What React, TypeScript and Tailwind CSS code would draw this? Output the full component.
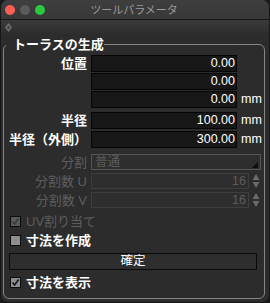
import React from "react";

const F = "font-['Liberation_Sans','Noto_Sans_CJK_JP',sans-serif]";

function Label({ children, disabled }: { children: React.ReactNode; disabled?: boolean }) {
  return (
    <div
      className={`w-[83px] shrink-0 text-right text-[13px] leading-[17px] whitespace-nowrap ${
        disabled ? "text-[#5e5e5e] font-normal" : "text-white font-bold"
      }`}
    >
      {children}
    </div>
  );
}

function NumField({ value, unit, label, className = "" }: { value: string; unit?: boolean; label?: React.ReactNode; className?: string }) {
  return (
    <div className={`flex items-center h-[17px] ${className}`}>
      <Label>{label}</Label>
      <div className="ml-[4px] w-[146px] h-[17px] bg-[#171717] border border-[#050505] flex items-center justify-end pr-[1px] text-[12.5px] leading-[15px] text-white">
        {value}
      </div>
      {unit && <div className="ml-[4px] text-[12.5px] leading-[15px] text-white">mm</div>}
    </div>
  );
}

function SpinField({ label, value, className = "" }: { label: string; value: string; className?: string }) {
  return (
    <div className={`flex items-center h-[16px] ${className}`}>
      <Label disabled>{label}</Label>
      <div className="ml-[4px] w-[158px] h-[16px] bg-[#2e2e2e] border border-[#3e3e3e] flex items-center justify-end pr-[2px] text-[12.5px] leading-[14px] text-[#5c5c5c]">
        {value}
      </div>
      <svg className="ml-[3px]" width="8" height="16" viewBox="0 0 8 16">
        <polygon points="4,1 7.5,7 0.5,7" fill="#6a6a6a" />
        <polygon points="0.5,9 7.5,9 4,15" fill="#6a6a6a" />
      </svg>
    </div>
  );
}

function Check({ checked, disabled, label, className = "" }: { checked?: boolean; disabled?: boolean; label: string; className?: string }) {
  return (
    <div className={`flex items-center h-[18px] ${className}`}>
      <div
        className={`ml-[6px] w-[11px] h-[11px] border border-[#0c0c0c] flex items-center justify-center ${
          disabled ? "bg-[#5a5a5a]" : "bg-[#8e8e8e]"
        }`}
      >
        {checked && (
          <svg width="9" height="9" viewBox="0 0 9 9">
            <path d="M1.5 4.5 L3.6 7 L7.6 1.5" fill="none" stroke={disabled ? "#3a3a3a" : "#151515"} strokeWidth="1.6" />
          </svg>
        )}
      </div>
      <div
        className={`ml-[5px] text-[13px] leading-[17px] ${
          disabled ? "text-[#5e5e5e] font-normal" : "text-white font-bold"
        }`}
      >
        {label}
      </div>
    </div>
  );
}

export default function App() {
  return (
    <div className={`w-[270px] h-[303px] bg-[#1a1a1a] ${F}`}>
      <div className="w-full h-full rounded-[8px] overflow-hidden bg-[#2c2c2c] border-x border-b border-[#161616] flex flex-col">
        {/* title bar */}
        <div className="h-[20px] shrink-0 border-b border-[#161616] bg-linear-to-b from-[#3e3e3e] to-[#383838] grid grid-cols-[1fr_auto_1fr] items-center">
          <div className="flex items-center pl-[4px] gap-[5px]">
            <div className="w-[10px] h-[10px] rounded-full bg-[#fd5f57]" />
            <div className="w-[10px] h-[10px] rounded-full bg-[#5b5b5b]" />
            <div className="w-[10px] h-[10px] rounded-full bg-[#2ac940]" />
          </div>
          <div className="text-[11px] leading-[14px] text-[#9a9a9a] -ml-[2px]">ツールパラメータ</div>
          <div />
        </div>
        {/* toolbar strip */}
        <div className="h-[14px] shrink-0 bg-linear-to-b from-[#3a3a3a] to-[#2d2d2d] flex items-center pl-[4px]">
          <svg width="7" height="9" viewBox="0 0 7 9">
            <polygon points="3.5,0 7,4.5 3.5,9 0,4.5" fill="#6f6f6f" />
            <polygon points="3.5,2.5 5,4.5 3.5,6.5 2,4.5" fill="#3a3a3a" />
          </svg>
        </div>
        {/* group box */}
        <fieldset className="ml-[2px] mr-[4px] mt-[3px] border border-[#858585] rounded-[6px] pb-[7px]">
          <legend className="ml-[2px] pl-[7px] text-[13px] leading-[15px] font-bold text-white">トーラスの生成</legend>
          <div className="flex flex-col pt-[3px]">
            <NumField label="位置" value="0.00" />
            <NumField value="0.00" className="mt-[1px]" />
            <NumField value="0.00" unit className="mt-[1px]" />
            <NumField label="半径" value="100.00" unit className="mt-[4px]" />
            <NumField label="半径（外側）" value="300.00" unit className="mt-[2px]" />
            <div className="flex items-center h-[16px] mt-[6px]">
              <Label disabled>分割</Label>
              <div className="relative ml-[4px] w-[170px] h-[16px] bg-[#2e2e2e] border border-[#555555] flex items-center pl-[3px] text-[12.5px] leading-[14px] text-[#5c5c5c]">
                普通
                <svg className="absolute right-[2px] bottom-[1px]" width="6" height="6" viewBox="0 0 6 6">
                  <polygon points="6,0 6,6 0,6" fill="#0c0c0c" />
                </svg>
              </div>
            </div>
            <SpinField label="分割数 U" value="16" className="mt-[3px]" />
            <SpinField label="分割数 V" value="16" className="mt-[3px]" />
            <Check checked disabled label="UV割り当て" className="mt-[4px]" />
            <Check label="寸法を作成" className="mt-[1px]" />
            <div className="ml-[5px] mt-[4px] w-[248px] h-[17px] border border-[#0a0a0a] bg-[#2e2e2e] flex items-center justify-center text-[12.5px] leading-[15px] text-white">
              確定
            </div>
            <Check checked label="寸法を表示" className="mt-[3px]" />
          </div>
        </fieldset>
      </div>
    </div>
  );
}
